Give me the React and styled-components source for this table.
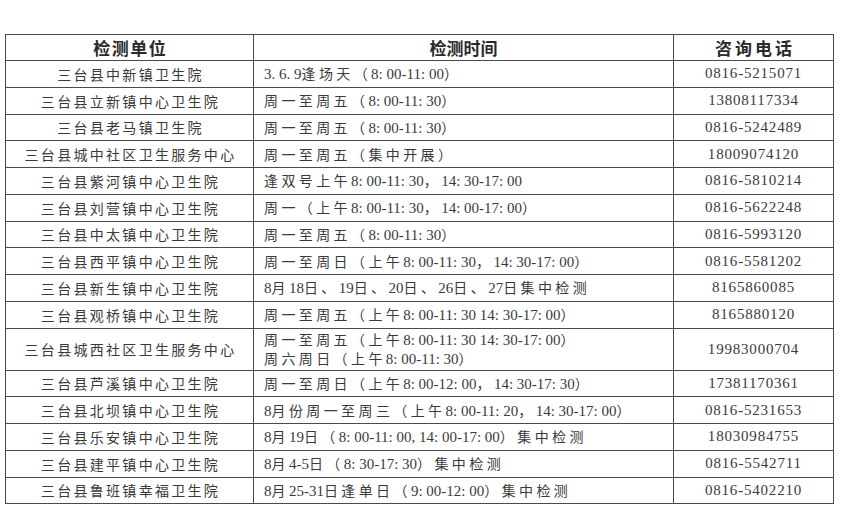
import React from "react";
import styled, { createGlobalStyle } from "styled-components";

const Global = createGlobalStyle`
  html, body { margin: 0; padding: 0; background: #fff; }
  body { font-family: "Liberation Serif", "Noto Sans CJK SC", serif; color: #333; }
`;

const Page = styled.div`
  width: 842px;
  height: 516px;
  padding: 34px 0 0 5px;
  box-sizing: border-box;
  background: #fff;
`;

const Table = styled.table`
  border-collapse: collapse;
  width: 828px;
  table-layout: fixed;
  border: 1px solid #4a4a4a;
`;

const Col = styled.col`
  width: ${(p) => p.$w}px;
`;

const HeadRow = styled.tr`
  height: 26px;
`;

const Row = styled.tr`
  height: ${(p) => (p.$tall ? 42 : 26.75)}px;
`;

const Th = styled.th`
  border: 1px solid #4a4a4a;
  padding: 0 0 0 ${(p) => p.$spacing || 0}px;
  font-family: "Noto Sans CJK SC", sans-serif;
  font-weight: 700;
  font-size: 17px;
  letter-spacing: ${(p) => p.$spacing || 0}px;
  color: #2a2a2a;
  text-align: center;
  vertical-align: middle;
  line-height: 1;
`;

const UnitCell = styled.td`
  border: 1px solid #4a4a4a;
  padding: 0 0 0 2px;
  font-family: "Noto Sans CJK SC", sans-serif;
  font-size: 14px;
  letter-spacing: 2.3px;
  color: #3a3a3a;
  text-align: center;
  vertical-align: middle;
  white-space: nowrap;
  line-height: 1;
`;

const TimeCell = styled.td`
  border: 1px solid #4a4a4a;
  padding: 0 0 0 10px;
  font-family: "Liberation Serif", "Noto Sans CJK SC", serif;
  font-size: 15px;
  color: #3a3a3a;
  text-align: left;
  vertical-align: middle;
  white-space: nowrap;
`;

const TimeLine = styled.div`
  line-height: 18px;
`;

const Han = styled.span`
  font-family: "Noto Sans CJK SC", sans-serif;
  font-size: 14px;
  letter-spacing: 3.4px;
  color: #3a3a3a;
`;

const PhoneCell = styled.td`
  border: 1px solid #4a4a4a;
  padding: 0;
  font-family: "Liberation Serif", serif;
  font-size: 15px;
  letter-spacing: 0.8px;
  color: #3a3a3a;
  text-align: center;
  vertical-align: middle;
  white-space: nowrap;
`;

const CJK = /([\u3000-\u303f\u4e00-\u9fff\uff00-\uffef]+)/;

function Mixed({ text }) {
  return text
    .split(CJK)
    .filter(Boolean)
    .map((part, i) =>
      CJK.test(part) ? <Han key={i}>{part}</Han> : <span key={i}>{part}</span>
    );
}

const rows = [
  ["三台县中新镇卫生院", ["3. 6. 9逢场天（8: 00-11: 00）"], "0816-5215071"],
  ["三台县立新镇中心卫生院", ["周一至周五（8: 00-11: 30）"], "13808117334"],
  ["三台县老马镇卫生院", ["周一至周五（8: 00-11: 30）"], "0816-5242489"],
  ["三台县城中社区卫生服务中心", ["周一至周五（集中开展）"], "18009074120"],
  ["三台县紫河镇中心卫生院", ["逢双号上午8: 00-11: 30，14: 30-17: 00"], "0816-5810214"],
  ["三台县刘营镇中心卫生院", ["周一（上午8: 00-11: 30，14: 00-17: 00）"], "0816-5622248"],
  ["三台县中太镇中心卫生院", ["周一至周五（8: 00-11: 30）"], "0816-5993120"],
  ["三台县西平镇中心卫生院", ["周一至周日（上午8: 00-11: 30，14: 30-17: 00）"], "0816-5581202"],
  ["三台县新生镇中心卫生院", ["8月18日、19日、20日、26日、27日集中检测"], "8165860085"],
  ["三台县观桥镇中心卫生院", ["周一至周五（上午8: 00-11: 30 14: 30-17: 00）"], "8165880120"],
  [
    "三台县城西社区卫生服务中心",
    ["周一至周五（上午8: 00-11: 30 14: 30-17: 00）", "周六周日（上午8: 00-11: 30）"],
    "19983000704",
  ],
  ["三台县芦溪镇中心卫生院", ["周一至周日（上午8: 00-12: 00，14: 30-17: 30）"], "17381170361"],
  ["三台县北坝镇中心卫生院", ["8月份周一至周三（上午8: 00-11: 20，14: 30-17: 00）"], "0816-5231653"],
  ["三台县乐安镇中心卫生院", ["8月19日（8: 00-11: 00, 14: 00-17: 00）集中检测"], "18030984755"],
  ["三台县建平镇中心卫生院", ["8月4-5日（8: 30-17: 30）集中检测"], "0816-5542711"],
  ["三台县鲁班镇幸福卫生院", ["8月25-31日逢单日（9: 00-12: 00）集中检测"], "0816-5402210"],
];

export default function App() {
  return (
    <Page>
      <Global />
      <Table>
        <colgroup>
          <Col $w={248} />
          <Col $w={420} />
          <Col $w={160} />
        </colgroup>
        <thead>
          <HeadRow>
            <Th $spacing={1.5}>检测单位</Th>
            <Th>检测时间</Th>
            <Th $spacing={3}>咨询电话</Th>
          </HeadRow>
        </thead>
        <tbody>
          {rows.map(([unit, times, phone]) => (
            <Row key={unit} $tall={times.length > 1}>
              <UnitCell>{unit}</UnitCell>
              <TimeCell>
                {times.map((t) => (
                  <TimeLine key={t}>
                    <Mixed text={t} />
                  </TimeLine>
                ))}
              </TimeCell>
              <PhoneCell>{phone}</PhoneCell>
            </Row>
          ))}
        </tbody>
      </Table>
    </Page>
  );
}
